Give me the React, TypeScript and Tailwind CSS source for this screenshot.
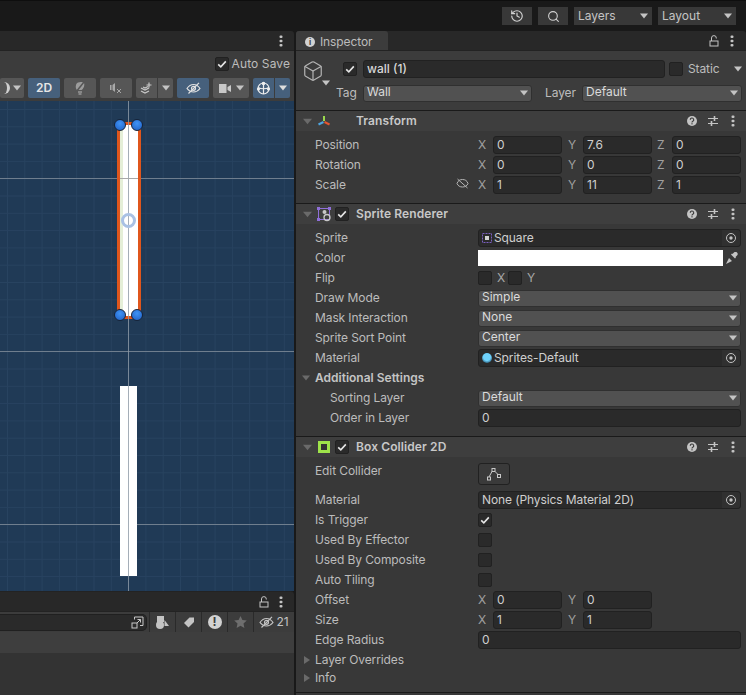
import React from 'react';
import { Box, History, Search } from 'lucide-react';

const Caret = ({ dir = 'down', color = '#c4c4c4', size = 8 }: { dir?: 'down' | 'right'; color?: string; size?: number }) => (
  <svg width={size} height={size} viewBox="0 0 8 8" className="shrink-0">
    {dir === 'down' ? <path d="M0 1.5h8L4 6.5z" fill={color} /> : <path d="M1 0v8l6-4z" fill={color} />}
  </svg>
);

const Kebab = () => (
  <svg width="4" height="12" viewBox="0 0 4 12" className="shrink-0">
    <rect x="0.5" y="0.5" width="3" height="2.4" rx="1" fill="#c4c4c4" />
    <rect x="0.5" y="4.8" width="3" height="2.4" rx="1" fill="#c4c4c4" />
    <rect x="0.5" y="9.1" width="3" height="2.4" rx="1" fill="#c4c4c4" />
  </svg>
);

const Lock = () => (
  <svg width="10" height="12" viewBox="0 0 10 12" className="shrink-0" fill="none" stroke="#c4c4c4" strokeWidth="1">
    <rect x="1" y="6" width="8" height="5" />
    <path d="M2.5 6V3a2.4 2.4 0 0 1 4.8 0v0.5" />
  </svg>
);

const Tick = () => (
  <svg width="10" height="10" viewBox="0 0 10 10" fill="none" stroke="#e6e6e6" strokeWidth="1.6">
    <path d="M1.2 5.4l2.6 2.4 5-5.4" />
  </svg>
);

const Check = ({ on = false }: { on?: boolean }) => (
  <div className="w-[14px] h-[14px] shrink-0 rounded-[2px] bg-[#2a2a2a] border border-[#212121] flex items-center justify-center">
    {on && <Tick />}
  </div>
);

const Label = ({ children, className = '' }: { children: React.ReactNode; className?: string }) => (
  <span className={`text-[#bcbcbc] tracking-[-0.1px] whitespace-nowrap ${className}`}>{children}</span>
);

const Row = ({ label, indent = false, children }: { label: string; indent?: boolean; children?: React.ReactNode }) => (
  <div className="h-5 flex items-center pr-[5px]">
    <Label className={`shrink-0 ${indent ? 'w-[163px] pl-[15px]' : 'w-[163px]'}`}>{label}</Label>
    {children}
  </div>
);

const Field = ({ children, className = 'flex-1' }: { children?: React.ReactNode; className?: string }) => (
  <div className={`h-[18px] px-[3px] flex items-center rounded-[3px] bg-[#2a2a2a] border border-[#212121] text-[#cfcfcf] ${className}`}>
    {children}
  </div>
);

const Axis = ({ name, value }: { name: string; value: string }) => (
  <div className="flex items-center w-[84px] shrink-0">
    <span className="w-[15px] shrink-0 text-[#a0a0a0]">{name}</span>
    <Field className="w-[70px]">{value}</Field>
  </div>
);

const Dropdown = ({ value }: { value: string }) => (
  <div className="flex-1 h-[17px] px-[3px] flex items-center justify-between rounded-[3px] bg-[#515151] border border-[#303030] text-[#dadada]">
    <span className="-mt-[2px]">{value}</span>
    <Caret />
  </div>
);

const ObjectField = ({ icon, value }: { icon?: React.ReactNode; value: string }) => (
  <div className="flex-1 h-[18px] flex items-center rounded-[3px] bg-[#2a2a2a] border border-[#212121] text-[#cfcfcf]">
    <div className="flex-1 flex items-center pl-[3px] gap-[2px] whitespace-nowrap tracking-[-0.1px]">
      {icon}
      {value}
    </div>
    <div className="w-[18px] h-full flex items-center justify-center bg-[#303030] rounded-r-[3px]">
      <svg width="12" height="12" viewBox="0 0 12 12" fill="none">
        <circle cx="6" cy="6" r="4.5" stroke="#c4c4c4" />
        <circle cx="6" cy="6" r="1.7" fill="#c4c4c4" />
      </svg>
    </div>
  </div>
);

const ComponentHeader = ({ icon, title, check = false }: { icon: React.ReactNode; title: string; check?: boolean }) => (
  <div className="h-[21px] flex items-center bg-[#3e3e3e] border-t border-[#1a1a1a] pl-[7px] pr-[11px] shrink-0">
    <Caret color="#6a6a6a" size={9} />
    <div className="ml-[4px] w-[16px] flex justify-center shrink-0">{icon}</div>
    <div className="ml-[3px] w-[14px] shrink-0">{check && <Check on />}</div>
    <span className="ml-[7px] flex-1 font-semibold text-[#c8c8c8] tracking-[0.1px]">{title}</span>
    <svg width="12" height="12" viewBox="0 0 12 12" className="shrink-0">
      <circle cx="6" cy="6" r="5" fill="#c4c4c4" />
      <path d="M4.3 4.8a1.7 1.7 0 1 1 2.5 1.4c-.6.3-.8.6-.8 1.2" stroke="#3e3e3e" strokeWidth="1.2" fill="none" />
      <rect x="5.4" y="8.2" width="1.2" height="1.2" fill="#3e3e3e" />
    </svg>
    <svg width="10" height="10" viewBox="0 0 10 10" className="shrink-0 ml-[10px]" stroke="#c4c4c4" strokeWidth="1">
      <path d="M0 2.500h10M0 7.500h10" />
      <path d="M6.500 0v5M3.500 5v5" strokeWidth="1.600" />
    </svg>
    <div className="ml-[13px]">
      <Kebab />
    </div>
  </div>
);

const ToolButton = ({ w, blue = false, children }: { w: string; blue?: boolean; children: React.ReactNode }) => (
  <div className={`h-5 rounded-[2px] flex items-center justify-center shrink-0 ${w} ${blue ? 'bg-[#46607c]' : 'bg-[#565656]'}`}>
    {children}
  </div>
);

const EyeSlash = ({ color = '#e2e2e2' }: { color?: string }) => (
  <svg width="15" height="12" viewBox="0 0 15 12" fill="none" stroke={color} strokeWidth="1.2">
    <path d="M1 6.5C3 3.5 5 2.5 7.5 2.5s4.5 1 6.5 4c-2 2.5-4 3.5-6.5 3.5S3 9 1 6.5z" />
    <path d="M2.5 11.5L13 .8" />
    <circle cx="7.5" cy="6.3" r="2" />
  </svg>
);

const Handle = ({ className }: { className: string }) => (
  <div className={`absolute w-[12px] h-[12px] rounded-full bg-[radial-gradient(circle_at_50%_35%,#3f93f5,#1f5fc4)] border border-[#16233a] ${className}`} />
);

function SceneView() {
  const minor = Array.from({ length: 32 }, (_, i) => i);
  return (
    <div className="relative flex-1 overflow-hidden bg-[#203a56]">
      <svg width="294" height="490" className="absolute left-0 top-0">
        {minor.map((i) => (
          <g key={i} stroke="#284360" strokeWidth="1">
            <line x1={7.5 + i * 17.3} y1="0" x2={7.5 + i * 17.3} y2="490" />
            <line x1="0" y1={8.5 + i * 17.3} x2="294" y2={8.5 + i * 17.3} />
          </g>
        ))}
        <g stroke="#6f7e8e" strokeWidth="1">
          <line x1="0" y1="77.5" x2="294" y2="77.5" />
          <line x1="0" y1="250.5" x2="294" y2="250.5" />
          <line x1="0" y1="423.5" x2="294" y2="423.5" />
        </g>
      </svg>

      {/* lower wall */}
      <div className="absolute left-[120px] top-[285px] w-[17px] h-[190px] bg-white" />
      {/* selected wall */}
      <div className="absolute left-[117px] top-[21px] w-[24px] h-[197px] bg-white border-[3px] border-[#e0561c]" />
      <div className="absolute left-[120px] top-[24px] w-[3px] h-[191px] bg-[#e5efd8]" />

      <div className="absolute left-[128px] top-0 w-px h-[490px] bg-[#8f9aa6]/80" />
      <div className="absolute left-[120px] top-[77px] w-[18px] h-px bg-[#a8a8a8]" />
      <div className="absolute left-[121px] top-[112px] w-[15px] h-[15px] rounded-full border-[3px] border-[#a9c1e4]" />

      <Handle className="left-[114px] top-[18px]" />
      <Handle className="left-[131px] top-[18px]" />
      <Handle className="left-[114px] top-[208px]" />
      <Handle className="left-[131px] top-[208px]" />
    </div>
  );
}

function LeftPanel() {
  return (
    <div className="w-[294px] shrink-0 flex flex-col overflow-hidden">
      <div className="h-[19px] bg-[#282828] rounded-tr-[3px] flex items-center justify-end pr-[11px] shrink-0">
        <Kebab />
      </div>
      <div className="h-[51px] bg-[#3c3c3c] border-t border-[#232323] shrink-0 flex flex-col">
        <div className="h-[26px] flex items-center justify-end pr-[4px] gap-[3px]">
          <Check on />
          <Label className="tracking-[0.1px]">Auto Save</Label>
        </div>
        <div className="flex items-center gap-[4px] pr-[4px] justify-end mt-px">
          <ToolButton w="w-[24px]">
            <div className="flex items-center">
              <div className="w-[7px] h-[12px] rounded-r-full border-r-[3px] border-[#cfcfcf]" />
              <span className="ml-[3px]"><Caret /></span>
            </div>
          </ToolButton>
          <ToolButton w="w-[32px]" blue>
            <span className="font-semibold text-[#e6e6e6]">2D</span>
          </ToolButton>
          <ToolButton w="w-[32px]">
            <svg width="12" height="14" viewBox="0 0 12 14" fill="none">
              <path d="M3 9C1 7 1.500 2.500 4 1.500s5-.5 6 .5c1 2-.5 6-2.500 7z" fill="#9c9c9c" />
              <path d="M4 11h4M4.500 13h3" stroke="#b8b8b8" strokeWidth="1.200" />
              <path d="M2 11l8-10" stroke="#565656" strokeWidth="1.500" />
            </svg>
          </ToolButton>
          <ToolButton w="w-[32px]">
            <svg width="14" height="12" viewBox="0 0 14 12" fill="none">
              <path d="M1 3h1.500v5H1zM3.500 3L6 1v9L3.500 8z" fill="#a8a8a8" />
              <path d="M8 7l4 4M12 7l-4 4" stroke="#a8a8a8" strokeWidth="1" />
            </svg>
          </ToolButton>
          <div className="flex shrink-0 w-[37px] h-5 rounded-[2px] bg-[#565656]">
            <div className="w-[22px] flex items-center justify-center border-r border-[#3c3c3c]">
              <svg width="13" height="13" viewBox="0 0 13 13" fill="none" stroke="#c8c8c8" strokeWidth="1.200">
                <path d="M1 6l4 2 4-2M1 9l4 2 4-2M3 5l2 1 3-1.500M9 .5v5M6.500 3h5" />
              </svg>
            </div>
            <div className="flex-1 flex items-center justify-center">
              <Caret />
            </div>
          </div>
          <ToolButton w="w-[32px]" blue>
            <EyeSlash />
          </ToolButton>
          <ToolButton w="w-[36px]">
            <div className="flex items-center gap-[5px]">
              <svg width="12" height="9" viewBox="0 0 12 9">
                <rect width="7.500" height="9" fill="#c8c8c8" />
                <path d="M8.500 3l3.500-2v7L8.500 6z" fill="#c8c8c8" />
              </svg>
              <Caret />
            </div>
          </ToolButton>
          <div className="flex shrink-0 w-[37px] h-5 rounded-[2px] bg-[#46607c]">
            <div className="w-[22px] flex items-center justify-center border-r border-[#3c3c3c]">
              <svg width="15" height="15" viewBox="0 0 15 15" fill="none" stroke="#eeeeee" strokeWidth="1.200">
                <circle cx="7.500" cy="7.500" r="5.500" />
                <path d="M2 6.500c3 1.500 8 1.500 11 0M7.500 2v11" />
                <circle cx="7.500" cy="2.500" r="1.800" fill="#eeeeee" stroke="none" />
                <circle cx="2.500" cy="8" r="1.600" fill="#eeeeee" stroke="none" />
                <circle cx="12.500" cy="8" r="1.600" fill="#eeeeee" stroke="none" />
              </svg>
            </div>
            <div className="flex-1 flex items-center justify-center">
              <Caret color="#dddddd" />
            </div>
          </div>
        </div>
      </div>
      <SceneView />
      <div className="h-[20px] bg-[#282828] shrink-0 rounded-tr-[3px] border-t border-[#232323] flex items-center justify-end pr-[11px] gap-[10px]">
        <Lock />
        <Kebab />
      </div>
      <div className="h-[21px] bg-[#3c3c3c] border-t border-[#232323] shrink-0 flex items-center">
        <div className="w-[147px] h-[17px] flex items-center justify-end pr-[2px] rounded-r-[5px] bg-[#2a2a2a] border-y border-r border-[#202020]">
          <svg width="13" height="13" viewBox="0 0 13 13" fill="none" stroke="#c8c8c8" strokeWidth="1">
            <path d="M3.500 3.500V1h8.500v8.500H9M6 7l3.500-3.500M6.500 3.500H9.500V6.500" />
            <rect x="1" y="7" width="5" height="5" />
          </svg>
        </div>
        <div className="w-[26px] h-full border-l border-[#2a2a2a] ml-[2px] flex items-center justify-center">
          <svg width="13" height="13" viewBox="0 0 13 13" fill="#c4c4c4">
            <rect x="1" y="0" width="7" height="6" />
            <circle cx="4" cy="9" r="4" />
            <path d="M8.500 4l4.500 6H8.500z" />
          </svg>
        </div>
        <div className="w-[26px] h-full border-l border-[#2a2a2a] flex items-center justify-center">
          <svg width="12" height="12" viewBox="0 0 12 12" fill="#c4c4c4">
            <path d="M6.500 1.500H11V6L5.500 11.500 1 7z" />
          </svg>
        </div>
        <div className="w-[26px] h-full border-l border-[#2a2a2a] flex items-center justify-center">
          <div className="w-[14px] h-[14px] rounded-full bg-[#d2d2d2] text-[#3c3c3c] font-bold flex items-center justify-center leading-none">!</div>
        </div>
        <div className="w-[26px] h-full border-l border-[#2a2a2a] flex items-center justify-center">
          <svg width="13" height="12" viewBox="0 0 13 12" fill="#6e6e6e">
            <path d="M6.500 0l1.900 4 4.400.500-3.300 3 .900 4.500-3.900-2.300L2.600 12l.9-4.500-3.300-3L4.600 4z" />
          </svg>
        </div>
        <div className="flex-1 h-full border-l border-[#2a2a2a] flex items-center justify-center gap-[2px] text-[#c4c4c4]">
          <EyeSlash color="#c4c4c4" />
          <span>21</span>
        </div>
      </div>
      <div className="h-[21px] bg-[#3e3e3e] shrink-0" />
      <div className="h-[42px] bg-[#333333] shrink-0" />
    </div>
  );
}

function Inspector() {
  return (
    <div className="flex-1 flex flex-col min-w-0">
      <div className="h-[19px] bg-[#282828] rounded-t-[3px] flex items-center justify-between pr-[12px] shrink-0">
        <div className="w-[92px] h-full bg-[#3c3c3c] rounded-t-[3px] flex items-center pl-[9px] gap-[5px] pt-[2px]">
          <div className="w-[10px] h-[10px] rounded-full bg-[#d2d2d2] text-[#3c3c3c] font-bold text-[8px] flex items-center justify-center leading-none">i</div>
          <Label>Inspector</Label>
        </div>
        <div className="flex items-center gap-[11px]">
          <Lock />
          <Kebab />
        </div>
      </div>

      <div className="h-[60px] bg-[#3c3c3c] border-t border-[#232323] shrink-0 pt-[8px] pr-[4px] flex flex-col">
        <div className="h-[20px] flex items-center">
          <div className="relative w-[47px] shrink-0 h-full">
            <div className="absolute left-[6px] top-[1px]">
              <Box size={22} color="#b4b4b4" strokeWidth={1.3} />
            </div>
            <div className="absolute left-[26px] top-[20px]">
              <Caret size={8} />
            </div>
          </div>
          <Check on />
          <div className="ml-[6px] w-[302px] h-[18px] rounded-[3px] bg-[#2a2a2a] border border-[#212121] pl-[3px] flex items-center font-medium text-[#d8d8d8]">
            wall (1)
          </div>
          <div className="ml-[4px]">
            <Check />
          </div>
          <Label className="ml-[5px] flex-1">Static</Label>
          <Caret />
        </div>
        <div className="h-[20px] mt-[4px] flex items-center">
          <Label className="w-[67px] pl-[40px] shrink-0">Tag</Label>
          <div className="w-[169px] flex">
            <Dropdown value="Wall" />
          </div>
          <Label className="ml-[13px] w-[37px] shrink-0">Layer</Label>
          <div className="flex-1 flex">
            <Dropdown value="Default" />
          </div>
        </div>
      </div>

      <ComponentHeader
        title="Transform"
        icon={
          <svg width="14" height="14" viewBox="0 0 14 14" fill="none" strokeWidth="2">
            <path d="M7 7V2" stroke="#9ad84e" />
            <path d="M6.500 8L1.500 10.500" stroke="#4ea5e0" />
            <path d="M7.500 8l5 2.500" stroke="#e5572f" />
          </svg>
        }
      />
      <div className="bg-[#383838] pl-[19px] pt-[4px] pb-[8px] shrink-0">
        {[
          ['Position', '0', '7.6', '0'],
          ['Rotation', '0', '0', '0'],
          ['Scale', '1', '11', '1'],
        ].map(([label, x, y, z]) => (
          <div key={label} className="h-5 flex items-center">
            <Label className="w-[163px] shrink-0 relative">
              {label}
              {label === 'Scale' && (
                <span className="absolute left-[141px] -top-px">
                  <svg width="13" height="11" viewBox="0 0 13 11" fill="none" stroke="#b4b4b4">
                    <path d="M1 5.500c1-3 3-4 5.500-4s4.500 1 5.500 4c-1 2.500-3 3.500-5.500 3.500S2 8 1 5.500zM1.500 1l10 9" />
                  </svg>
                </span>
              )}
            </Label>
            <Axis name="X" value={x} />
            <div className="w-[6px] shrink-0" />
            <Axis name="Y" value={y} />
            <div className="w-[5px] shrink-0" />
            <Axis name="Z" value={z} />
          </div>
        ))}
      </div>

      <ComponentHeader
        check
        title="Sprite Renderer"
        icon={
          <svg width="15" height="15" viewBox="0 0 15 15" fill="none">
            <rect x="1.500" y="1.500" width="11" height="11" stroke="#8f6fd8" />
            <rect x="0" y="0" width="3" height="3" fill="#8f6fd8" />
            <rect x="11" y="0" width="3" height="3" fill="#8f6fd8" />
            <rect x="0" y="11" width="3" height="3" fill="#8f6fd8" />
            <circle cx="10" cy="10.500" r="3" stroke="#c8c8c8" strokeWidth="1.300" />
            <circle cx="7.500" cy="5" r="2" fill="#c8c8c8" />
          </svg>
        }
      />
      <div className="bg-[#383838] pl-[19px] pt-[4px] pb-[8px] shrink-0">
        <Row label="Sprite">
          <ObjectField
            value="Square"
            icon={
              <svg width="10" height="10" viewBox="0 0 10 10" fill="none">
                <rect x="0.500" y="0.500" width="9" height="9" stroke="#7a5fc0" strokeDasharray="2 1" />
                <rect x="3" y="3" width="4" height="4" fill="#d2d2d2" />
              </svg>
            }
          />
        </Row>
        <Row label="Color">
          <div className="flex-1 h-[18px] flex">
            <div className="flex-1 bg-white my-px" />
            <div className="w-[18px] flex items-center justify-center">
              <svg width="12" height="12" viewBox="0 0 12 12" fill="#c4c4c4">
                <path d="M8 0.500a2 2 0 0 1 3 3l-1.500 1.500 .5.500-1 1-4-4 1-1 .5.500zM3 6L1 10l-1 2 2-1 4-2z" />
              </svg>
            </div>
          </div>
        </Row>
        <Row label="Flip">
          <Check />
          <span className="ml-[5px] w-[11px] text-[#a8a8a8]">X</span>
          <Check />
          <span className="ml-[5px] text-[#a8a8a8]">Y</span>
        </Row>
        <Row label="Draw Mode">
          <Dropdown value="Simple" />
        </Row>
        <Row label="Mask Interaction">
          <Dropdown value="None" />
        </Row>
        <Row label="Sprite Sort Point">
          <Dropdown value="Center" />
        </Row>
        <Row label="Material">
          <ObjectField
            value="Sprites-Default"
            icon={
              <div className="w-[10px] h-[10px] rounded-full bg-[radial-gradient(circle_at_50%_40%,#6fd2fb_45%,#2a5f7d_80%)]" />
            }
          />
        </Row>
        <div className="h-5 flex items-center -ml-[13px] gap-[5px] font-semibold text-[#c4c4c4]">
          <Caret color="#6a6a6a" />
          Additional Settings
        </div>
        <Row label="Sorting Layer" indent>
          <Dropdown value="Default" />
        </Row>
        <Row label="Order in Layer" indent>
          <Field>0</Field>
        </Row>
      </div>

      <ComponentHeader
        check
        title="Box Collider 2D"
        icon={
          <div className="w-[12px] h-[12px] bg-[#9ee34a] flex items-center justify-center">
            <div className="w-[6px] h-[6px] bg-[#333333]" />
          </div>
        }
      />
      <div className="bg-[#383838] pl-[19px] pt-[6px] shrink-0 flex-1">
        <div className="h-[27px] flex pr-[5px]">
          <Label className="w-[163px] shrink-0 pt-[2px]">Edit Collider</Label>
          <div className="w-[32px] h-[22px] rounded-[3px] bg-[#3a3a3a] border border-[#212121] flex items-center justify-center">
            <svg width="14" height="13" viewBox="0 0 14 13" fill="none" stroke="#c8c8c8">
              <rect x="5" y="0.500" width="3" height="3" />
              <rect x="0.500" y="9" width="3" height="3" />
              <rect x="10.500" y="6.500" width="3" height="3" />
              <path d="M2 9l3-5.500M8 3.500l3 3" />
            </svg>
          </div>
        </div>
        <Row label="Material">
          <ObjectField value="None (Physics Material 2D)" />
        </Row>
        <Row label="Is Trigger">
          <Check on />
        </Row>
        <Row label="Used By Effector">
          <Check />
        </Row>
        <Row label="Used By Composite">
          <Check />
        </Row>
        <Row label="Auto Tiling">
          <Check />
        </Row>
        {[
          ['Offset', '0', '0'],
          ['Size', '1', '1'],
        ].map(([label, x, y]) => (
          <div key={label} className="h-5 flex items-center">
            <Label className="w-[163px] shrink-0">{label}</Label>
            <Axis name="X" value={x} />
            <div className="w-[6px] shrink-0" />
            <Axis name="Y" value={y} />
          </div>
        ))}
        <Row label="Edge Radius">
          <Field>0</Field>
        </Row>
        <div className="h-5 flex items-center -ml-[12px] gap-[4px]">
          <Caret dir="right" color="#6a6a6a" />
          <Label>Layer Overrides</Label>
        </div>
        <div className="h-4 flex items-center -ml-[12px] gap-[4px]">
          <Caret dir="right" color="#6a6a6a" />
          <Label>Info</Label>
        </div>
      </div>
      <div className="h-[3px] bg-[#383838] border-t border-[#1a1a1a] shrink-0" />
    </div>
  );
}

export default function App() {
  return (
    <div className="w-[746px] h-[695px] overflow-hidden bg-[#191919] flex flex-col text-[12px] leading-none font-['Inter',sans-serif]">
      <div className="h-[31px] shrink-0 flex items-center justify-end pr-[10px] gap-[6px] border-t border-[#0e0e0e]">
        <div className="w-[30px] h-[18px] bg-[#383838] flex items-center justify-center">
          <History size={14} color="#d2d2d2" />
        </div>
        <div className="w-[30px] h-[18px] bg-[#383838] flex items-center justify-center">
          <Search size={13} color="#d2d2d2" />
        </div>
        <div className="w-[78px] h-[18px] bg-[#383838] flex items-center justify-between px-[4px] text-[#c4c4c4]">
          Layers
          <Caret />
        </div>
        <div className="w-[78px] h-[18px] bg-[#383838] flex items-center justify-between px-[4px] text-[#c4c4c4]">
          Layout
          <Caret />
        </div>
      </div>
      <div className="flex-1 flex gap-[2px] min-h-0">
        <LeftPanel />
        <Inspector />
      </div>
    </div>
  );
}
